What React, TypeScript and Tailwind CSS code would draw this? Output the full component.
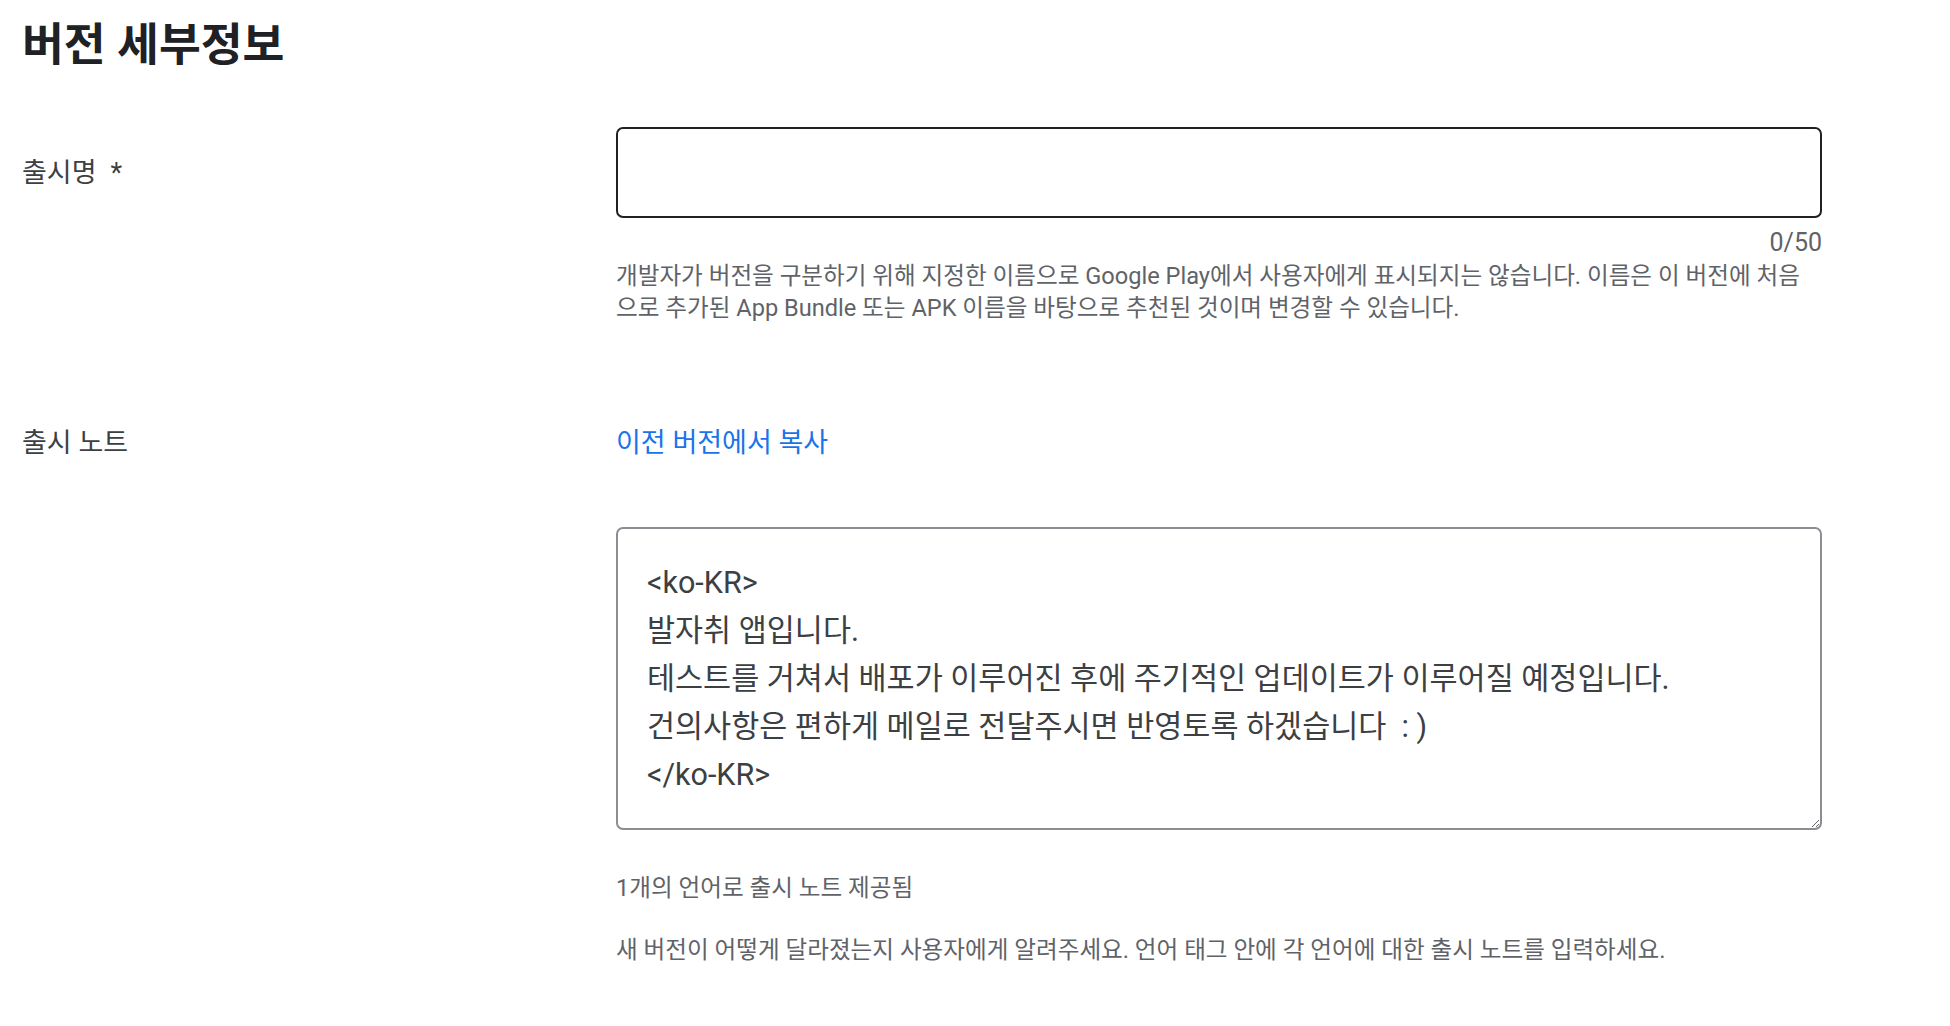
import React from "react";

const FONT = { fontFamily: 'Roboto, "Noto Sans CJK KR", "Noto Sans", sans-serif' };

export default function App() {
  const notes =
    "<ko-KR>\n발자취 앱입니다.\n테스트를 거쳐서 배포가 이루어진 후에 주기적인 업데이트가 이루어질 예정입니다.\n건의사항은 편하게 메일로 전달주시면 반영토록 하겠습니다  : )\n</ko-KR>";
  return (
    <div className="min-h-screen w-full bg-white pl-[22px] pt-[16px]" style={FONT}>
      <h1 className="text-[45.5px] leading-[60px] font-bold text-[#202124]">버전 세부정보</h1>

      {/* Row 1 */}
      <div className="mt-[51px] flex">
        <div className="w-[594px] shrink-0 pt-[29px]">
          <div className="text-[27px] leading-[34px] text-[#3c4043]">
            출시명<span className="ml-[14px]">*</span>
          </div>
        </div>
        <div className="w-[1206px] flex flex-col">
          <input
            type="text"
            className="h-[91px] w-full rounded-[7px] border-2 border-[#202124] bg-white px-[24px] text-[27px] outline-none"
            style={FONT}
          />
          <div className="mt-[11px] text-right text-[25px] leading-[28px] text-[#5f6368]">0/50</div>
          <div className="mt-[3px] whitespace-nowrap text-[23.6px] leading-[32px] text-[#5f6368]">
            개발자가 버전을 구분하기 위해 지정한 이름으로 Google Play에서 사용자에게 표시되지는 않습니다. 이름은 이 버전에 처음
            <br />
            으로 추가된 App Bundle 또는 APK 이름을 바탕으로 추천된 것이며 변경할 수 있습니다.
          </div>
        </div>
      </div>

      {/* Row 2 */}
      <div className="mt-[102px] flex">
        <div className="w-[594px] shrink-0">
          <div className="text-[27px] leading-[34px] text-[#3c4043]">출시 노트</div>
        </div>
        <div className="w-[1206px] flex flex-col">
          <div className="text-[27px] leading-[34px] text-[#1a73e8]">이전 버전에서 복사</div>
          <textarea
            readOnly
            defaultValue={notes}
            className="mt-[67px] h-[303px] w-full rounded-[7px] border-2 border-[#8a8e93] bg-white pl-[29px] pr-[24px] pt-[30px] pb-[20px] text-[30.5px] leading-[48px] text-[#3c4043] outline-none"
            style={FONT}
          />
          <div className="mt-[42px] text-[23.6px] leading-[32px] text-[#5f6368]">1개의 언어로 출시 노트 제공됨</div>
          <div className="mt-[30px] text-[23.6px] leading-[32px] text-[#5f6368]">
            새 버전이 어떻게 달라졌는지 사용자에게 알려주세요. 언어 태그 안에 각 언어에 대한 출시 노트를 입력하세요.
          </div>
        </div>
      </div>
    </div>
  );
}
